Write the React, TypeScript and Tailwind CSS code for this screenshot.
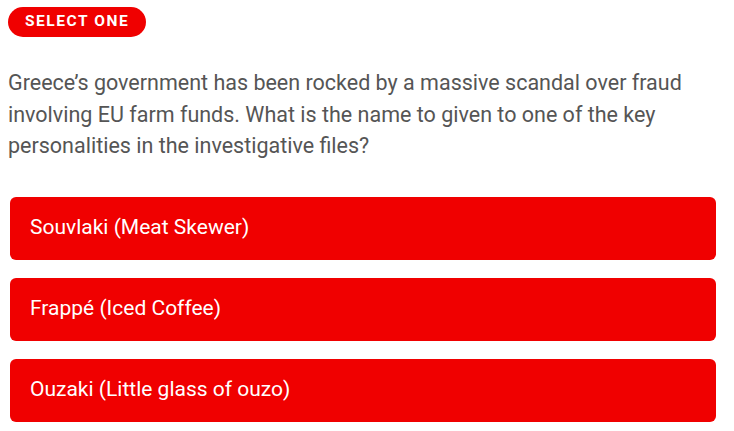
export default function App() {
  const options = ['Souvlaki (Meat Skewer)', 'Frappé (Iced Coffee)', 'Ouzaki (Little glass of ouzo)']
  return (
    <div className="h-[431px] w-[734px] bg-white font-['Roboto',sans-serif]">
      <div className="px-2 pt-[7px]">
        <span className="inline-flex h-[30px] items-center rounded-full bg-[#f00000] px-[17px] text-[15.5px] font-bold tracking-[0.1em] text-white">
          SELECT ONE
        </span>
      </div>
      <p className="mt-[30px] w-[716px] px-2 text-[21.5px] leading-[31.5px] text-[#555]">
        Greece’s government has been rocked by a massive scandal over fraud involving EU farm funds. What is the name to
        given to one of the key personalities in the investigative files?
      </p>
      <div className="mt-[35px] flex w-[716px] flex-col gap-[18px] pl-[10px]">
        {options.map((o) => (
          <button
            key={o}
            type="button"
            className="flex h-[63px] items-center rounded-[6px] bg-[#f00000] px-5 text-left text-[21px] font-normal text-white"
          >
            {o}
          </button>
        ))}
      </div>
    </div>
  )
}
